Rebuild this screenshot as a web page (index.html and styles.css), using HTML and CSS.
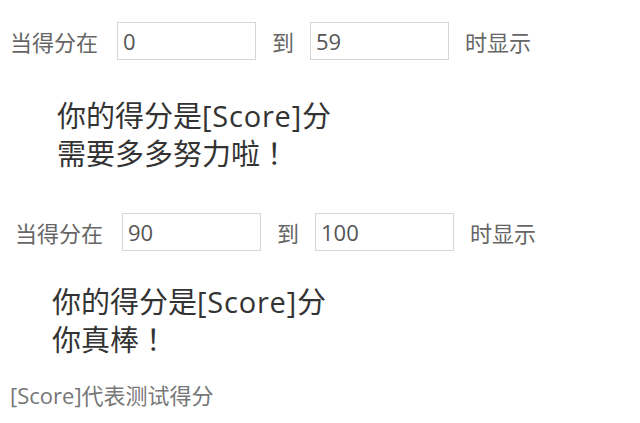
FILE: index.html
```html
<!DOCTYPE html>
<html lang="zh-CN">
<head>
    <meta charset="utf-8">
    <title>得分评语</title>
    <link rel="stylesheet" href="styles.css">
</head>
<body>
    <div class="rule rule-first">
        <span class="label">当得分在</span>
        <input class="score" type="text" value="0">
        <span class="to">到</span>
        <input class="score" type="text" value="59">
        <span class="tail">时显示</span>
    </div>
    <div class="msg msg-first">
        你的得分是<span class="token">[Score]</span>分<br>
        需要多多努力啦<span class="bang">！</span>
    </div>

    <div class="rule rule-second">
        <span class="label">当得分在</span>
        <input class="score" type="text" value="90">
        <span class="to">到</span>
        <input class="score" type="text" value="100">
        <span class="tail">时显示</span>
    </div>
    <div class="msg msg-second">
        你的得分是<span class="token">[Score]</span>分<br>
        你真棒<span class="bang">！</span>
    </div>

    <p class="note"><span class="token">[Score]</span>代表测试得分</p>
</body>
</html>
```
FILE: styles.css
```css
body {
    margin: 0;
    background-color: #fff;
    font-family: "Noto Sans CJK SC", sans-serif;
}

/* latin bits set in a wider face */
.token {
    font-family: "Open Sans", "Noto Sans CJK SC", sans-serif;
}

.bang {
    margin-left: 7px;
}

/* score range rows */
.rule {
    display: flex;
    align-items: center;
    height: 38px;
    font-size: 22px;
    color: #666;
}
.rule-first {
    margin-top: 22px;
    padding-left: 10px;
}
.rule-second {
    margin-top: 43px;
    padding-left: 15px;
}
.label {
    margin-right: 19px;
}
.to {
    margin: 0 16px;
}
.tail {
    margin-left: 16px;
}
.score {
    box-sizing: border-box;
    width: 139px;
    height: 38px;
    margin: 0;
    padding: 0 5px;
    border: 1px solid #d6d6d6;
    font-family: "Open Sans", sans-serif;
    font-size: 22px;
    color: #555;
    outline: none;
}

/* message shown for the range */
.msg {
    font-size: 29px;
    line-height: 36px;
    color: #333;
}
.msg .token {
    letter-spacing: 0.8px;
}
.msg-first {
    margin-top: 36px;
    padding-left: 57px;
}
.msg-second {
    margin-top: 31px;
    padding-left: 52px;
}

.note {
    margin: 24px 0 0;
    padding-left: 10px;
    font-size: 22px;
    line-height: 28px;
    color: #777;
}
```
